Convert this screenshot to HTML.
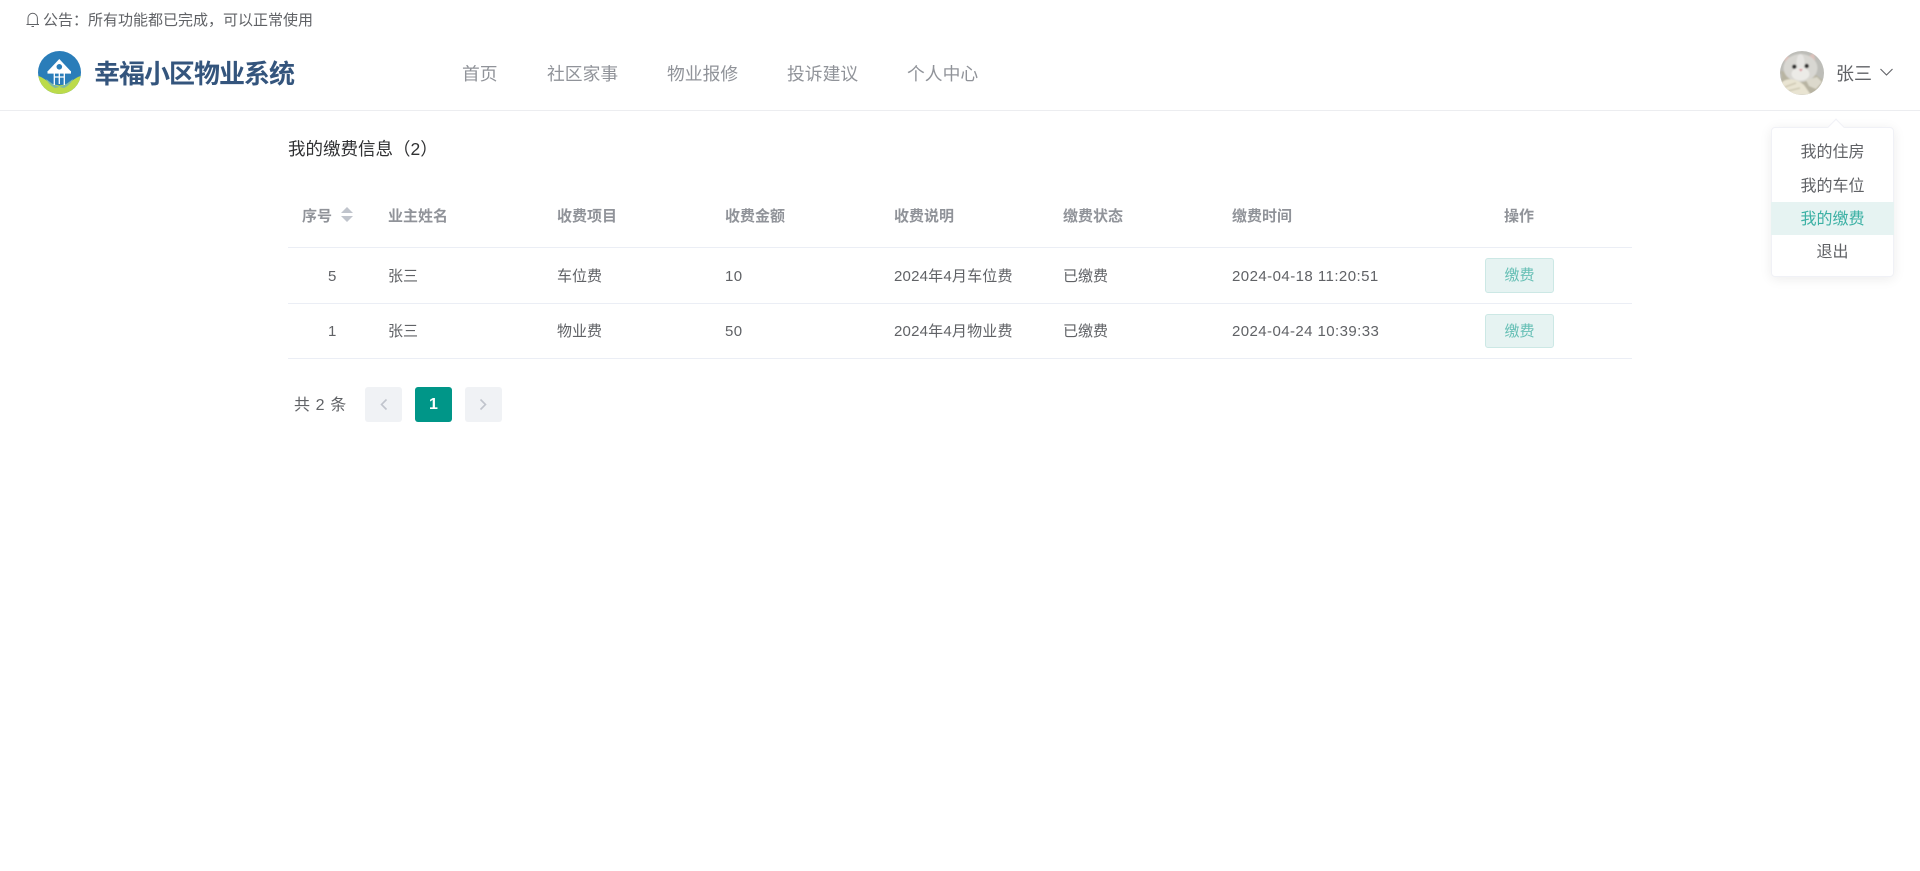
<!DOCTYPE html>
<html lang="zh-CN"><head><meta charset="utf-8"><title>幸福小区物业系统</title>
<style>
*{box-sizing:border-box}
html,body{margin:0;padding:0;width:1920px;height:871px;overflow:hidden;background:#fff;font-family:"Liberation Sans","Noto Sans CJK SC",sans-serif}
.t{position:absolute;white-space:nowrap;line-height:20px;height:20px}
.l{position:absolute;background:#ebeef5;height:1px}
.h{font-size:15px;font-weight:700;color:#909399}
.c{font-size:15px;color:#606266}
.n{font-size:17.800px;color:#909399}
.m{font-size:16px;color:#606266;width:123px;left:1771px;text-align:center}
.b{position:absolute;left:1485px;width:69px;background:#e6f3f2;border:1px solid #cce8e5;border-radius:3px;color:#66bfb5;font-size:15px;text-align:center}
.p{position:absolute;top:387px;width:37px;height:35px;border-radius:3px;background:#f0f2f5}
</style></head><body>

<svg style="position:absolute;left:25px;top:11px" width="16" height="17" viewBox="0 0 16 17" fill="none" stroke="#606266" stroke-width="1"><path d="M1.500 13.500h12.500M3 13.500V7a4.700 4.700 0 0 1 9.400 0v6.500M6.500 15.500h2.500"/></svg>
<div class="t" style="left:43px;top:11px;font-size:15px;color:#606266">公告：所有功能都已完成，可以正常使用</div>

<svg style="position:absolute;left:38px;top:51px" width="43" height="43" viewBox="0 0 43 43">
<defs><clipPath id="k"><circle cx="21.500" cy="21.500" r="21.500"/></clipPath></defs>
<g clip-path="url(#k)"><rect width="43" height="43" fill="#2a7db9"/>
<path d="M0 25C5 26 10 31 14 33L21.500 34.500 29 33C33 31 38 26 43 25V43H0Z" fill="#bcdb4a"/>
<path d="M8 28C11 30 14 33 17 34L21.500 36 17 37C13 35 10 32 8 28ZM35 28C32 30 29 33 26 34L21.500 36 26 37C30 35 33 32 35 28Z" fill="#7fb9a6"/>
<path d="M21.300 8 33 20.500H9.500Z" fill="#fff"/>
<rect x="9.500" y="20" width="23.500" height="2.600" fill="#fff"/>
<circle cx="21.300" cy="15.800" r="2.800" fill="#2a7db9"/>
<path d="M16.300 22v12M21.300 22v11M26.300 22v12M16.300 26h10" stroke="#fff" stroke-width="1.300" fill="none"/></g></svg>
<div class="t" style="left:94px;top:60px;height:28px;line-height:28px;font-size:26px;letter-spacing:-1px;font-weight:700;color:#34557d">幸福小区物业系统</div>

<div class="t n" style="left:462px;top:64px">首页</div>
<div class="t n" style="left:547px;top:64px">社区家事</div>
<div class="t n" style="left:667px;top:64px">物业报修</div>
<div class="t n" style="left:787px;top:64px">投诉建议</div>
<div class="t n" style="left:907px;top:64px">个人中心</div>

<svg style="position:absolute;left:1780px;top:51px" width="44" height="44" viewBox="0 0 44 44">
<defs><clipPath id="a"><circle cx="22" cy="22" r="22"/></clipPath><filter id="f" x="-10%" y="-10%" width="120%" height="120%"><feGaussianBlur stdDeviation=".8"/></filter></defs>
<g clip-path="url(#a)"><rect width="44" height="44" fill="#bdbdb8"/>
<g filter="url(#f)">
<path d="M0 20C4 26 0 30 0 44H44V30L36 24Z" fill="#b8b4a2"/>
<path d="M4 4 14 8 6 18ZM34 2 36 16 26 7Z" fill="#dcc0ba"/>
<ellipse cx="20.500" cy="17" rx="17" ry="14" fill="#d8d7d2"/>
<ellipse cx="20.500" cy="11" rx="4" ry="8" fill="#e6e5e2"/>
<ellipse cx="20.500" cy="23" rx="9" ry="6.500" fill="#ecebe7"/>
<circle cx="14.300" cy="15.700" r="2.200" fill="#2d2d2e"/><circle cx="26.700" cy="15" r="2.200" fill="#2d2d2e"/>
<path d="M18.800 18h4l-2 2.600Z" fill="#d98d95"/>
<path d="M0 33C6 26 16 27 24 34L31 44H0Z" fill="#e9e4d2"/>
<path d="M5 36 16 32M8 40 20 37" stroke="#cfc9b4" stroke-width="1.500"/>
<path d="M26 29 37 26 42 31 36 38 29 35Z" fill="#dcd9cc"/>
</g></g></svg>
<div class="t" style="left:1836px;top:64px;font-size:18px;color:#606266">张三</div>
<svg style="position:absolute;left:1879px;top:67px" width="15" height="10" viewBox="0 0 15 10" fill="none" stroke="#606266" stroke-width="1.100"><path d="M1.500 2 7.500 8 13.500 2"/></svg>
<div class="l" style="left:0;top:110px;width:1920px;background:#ecedf0"></div>

<div style="position:absolute;left:1771px;top:127px;width:123px;height:150px;background:#fff;border:1px solid #f0f1f6;border-radius:4px;box-shadow:0 2px 12px rgba(0,0,0,.08)"></div>
<div style="position:absolute;left:1830px;top:121px;width:12px;height:12px;background:#fff;transform:rotate(45deg);border-top:1px solid #f0f1f6;border-left:1px solid #f0f1f6"></div>
<div style="position:absolute;left:1771px;top:202px;width:123px;height:33px;background:#e6f3f2"></div>
<div class="t m" style="top:143px">我的住房</div>
<div class="t m" style="top:177px">我的车位</div>
<div class="t m" style="top:210px;color:#3bb0a4">我的缴费</div>
<div class="t m" style="top:243px">退出</div>

<div class="t" style="left:288px;top:138px;font-size:17.500px;color:#303133;height:22px;line-height:22px">我的缴费信息（2）</div>

<div class="t h" style="left:302px;top:207px">序号</div>
<div style="position:absolute;left:341px;top:207px;border:6.500px solid transparent;border-top:0;border-bottom:6.500px solid #c0c4cc"></div>
<div style="position:absolute;left:341px;top:216px;border:6.500px solid transparent;border-bottom:0;border-top:6.500px solid #c0c4cc"></div>
<div class="t h" style="left:388px;top:207px">业主姓名</div>
<div class="t h" style="left:557px;top:207px">收费项目</div>
<div class="t h" style="left:725px;top:207px">收费金额</div>
<div class="t h" style="left:894px;top:207px">收费说明</div>
<div class="t h" style="left:1063px;top:207px">缴费状态</div>
<div class="t h" style="left:1232px;top:207px">缴费时间</div>
<div class="t h" style="left:1504px;top:207px">操作</div>
<div class="l" style="left:288px;top:247px;width:1344px"></div>

<div class="t c" style="left:328px;top:267px">5</div>
<div class="t c" style="left:388px;top:267px">张三</div>
<div class="t c" style="left:557px;top:267px">车位费</div>
<div class="t c" style="left:725px;top:267px;letter-spacing:.4px">10</div>
<div class="t c" style="left:894px;top:267px;letter-spacing:.2px">2024年4月车位费</div>
<div class="t c" style="left:1063px;top:267px">已缴费</div>
<div class="t c" style="left:1232px;top:267px;letter-spacing:.45px">2024-04-18 11:20:51</div>
<div class="b" style="top:258px;height:35px;line-height:34px">缴费</div>
<div class="l" style="left:288px;top:303px;width:1344px"></div>

<div class="t c" style="left:328px;top:322px">1</div>
<div class="t c" style="left:388px;top:322px">张三</div>
<div class="t c" style="left:557px;top:322px">物业费</div>
<div class="t c" style="left:725px;top:322px;letter-spacing:.4px">50</div>
<div class="t c" style="left:894px;top:322px;letter-spacing:.2px">2024年4月物业费</div>
<div class="t c" style="left:1063px;top:322px">已缴费</div>
<div class="t c" style="left:1232px;top:322px;letter-spacing:.42px">2024-04-24 10:39:33</div>
<div class="b" style="top:314px;height:34px;line-height:33px">缴费</div>
<div class="l" style="left:288px;top:358px;width:1344px"></div>

<div class="t" style="left:294px;top:396px;font-size:16px;color:#606266;letter-spacing:.6px">共 2 条</div>
<div class="p" style="left:365px"><svg width="37" height="35" viewBox="0 0 37 35" fill="none" stroke="#c0c4cc" stroke-width="1.600"><path d="M21.500 12.500 16.500 17.500 21.500 22.500"/></svg></div>
<div class="p" style="left:415px;background:#009688;color:#fff;font-size:16px;font-weight:700;text-align:center;line-height:36px">1</div>
<div class="p" style="left:465px"><svg width="37" height="35" viewBox="0 0 37 35" fill="none" stroke="#c0c4cc" stroke-width="1.600"><path d="M15.500 12.500 20.500 17.500 15.500 22.500"/></svg></div>
</body></html>
